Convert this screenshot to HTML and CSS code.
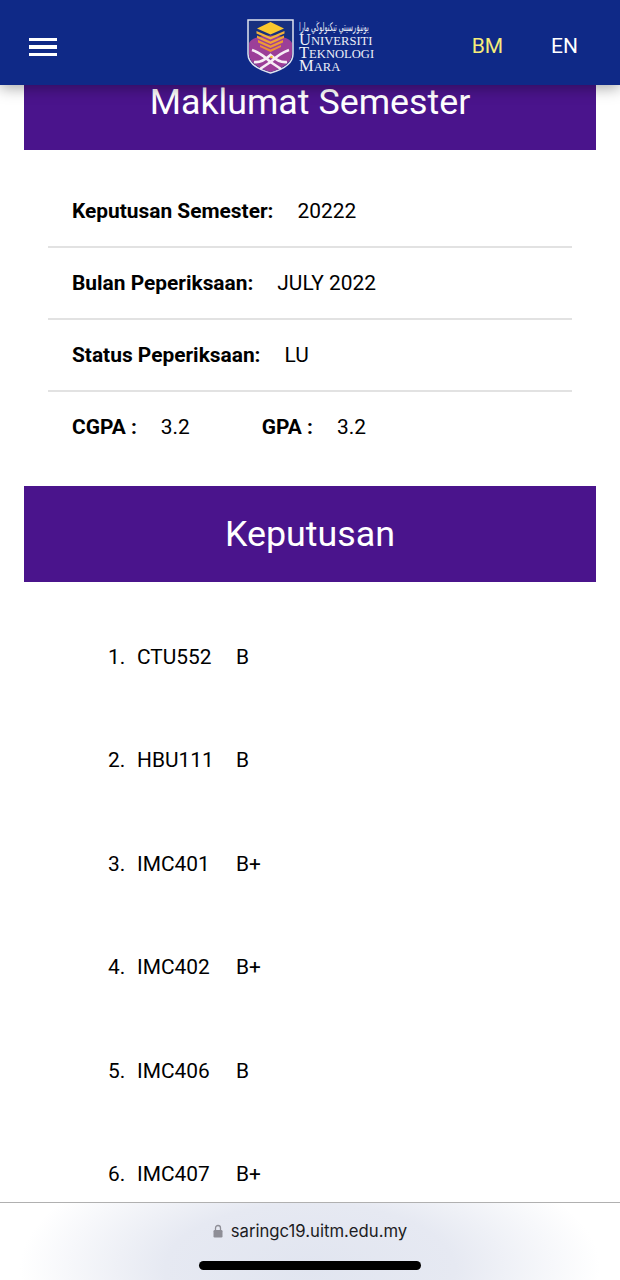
FILE: index.html
```html
<!DOCTYPE html>
<html lang="en">

<head>
  <meta charset="UTF-8">
  <meta name="viewport" content="width=device-width, initial-scale=1.0">
  <title>Keputusan Peperiksaan</title>
  <link rel="stylesheet" href="styles.css">
</head>

<body>
  <header class="topbar">
    <div class="burger"><span></span><span></span><span></span></div>
    <div class="logo">
      <svg class="crest" width="47" height="55" viewBox="0 0 47 55">
        <path d="M1 1H46V35C46 45 34 51 23.500 54C13 51 1 45 1 35Z" fill="#17307f" stroke="#dfe3f0" stroke-width="1.500"/>
        <path d="M2 24C6 14 41 14 45 24V35C45 44 34 50 23.500 53C13 50 2 44 2 35Z" fill="#9c3f98"/>
        <path d="M23.500 3L37 9.500L23.500 15.500L10 9.500Z" fill="#f9c72e"/>
        <path d="M9.500 12L23.500 18L37.500 12V14.500L23.500 20.500L9.500 14.500Z" fill="#f3b23a"/>
        <path d="M10 16.500L23.500 22.500L37 16.500V19L23.500 25L10 19Z" fill="#f0a236"/>
        <path d="M11 21L23.500 26.500L36 21V23.500L23.500 29L11 23.500Z" fill="#ee9a34"/>
        <path d="M13 26L23.500 30.500L34 26V28L23.500 33L13 28Z" fill="#ea8f38"/>
        <path d="M5 31C11 33 17 37 23.500 43C30 37 36 33 42 31M7 43C13 44 18 41 23.500 36C29 41 34 44 40 43M13 50L23.500 43L34 50" fill="none" stroke="#f6eef5" stroke-width="2.600"/>
        <circle cx="24.500" cy="38" r="1.300" fill="#f9c72e"/>
      </svg>
      <div class="wordmark">
        <div class="jawi">يونيۏرسيتي تيكنولوڬي مارا</div>
        <div class="uni">U<small>NIVERSITI</small></div>
        <div class="uni">T<small>EKNOLOGI</small></div>
        <div class="uni">M<small>ARA</small></div>
      </div>
    </div>
    <div class="langs">
      <a class="lang active">BM</a>
      <a class="lang">EN</a>
    </div>
  </header>

  <main>
    <h2 class="band band-first">Maklumat Semester</h2>
    <div class="info">
      <div class="info-row"><b>Keputusan Semester:</b><span>20222</span></div>
      <div class="info-row"><b>Bulan Peperiksaan:</b><span>JULY 2022</span></div>
      <div class="info-row"><b>Status Peperiksaan:</b><span>LU</span></div>
      <div class="info-row no-line">
        <b>CGPA :</b><span class="cgpa-val">3.2</span>
        <b>GPA :</b><span>3.2</span>
      </div>
    </div>

    <h2 class="band">Keputusan</h2>
    <ol class="results">
      <li><span class="code">CTU552</span><span>B</span></li>
      <li><span class="code">HBU111</span><span>B</span></li>
      <li><span class="code">IMC401</span><span>B+</span></li>
      <li><span class="code">IMC402</span><span>B+</span></li>
      <li><span class="code">IMC406</span><span>B</span></li>
      <li><span class="code">IMC407</span><span>B+</span></li>
    </ol>
  </main>

  <footer class="safari">
    <div class="url">
      <svg width="10" height="14" viewBox="0 0 10 14"><path d="M2.500 6V4a2.500 2.500 0 0 1 5 0V6" fill="none" stroke="#8e8e96" stroke-width="1.300"/><rect x="0.500" y="6" width="9" height="7.500" rx="1.200" fill="#8e8e96"/></svg>
      <span>saringc19.uitm.edu.my</span>
    </div>
    <div class="home"></div>
  </footer>
</body>

</html>
```
FILE: styles.css
```css
body {
  margin: 0;
  width: 620px;
  height: 1280px;
  overflow: hidden;
  background: #fff;
  color: #000;
  font-family: Roboto, "Liberation Sans", sans-serif;
  font-size: 20.900px;
}

/* top navigation */
.topbar {
  height: 85px;
  display: flex;
  align-items: center;
  padding: 8px 42px 0 29px;
  background: #0f2987;
  box-shadow: 0 3px 14px rgba(0, 0, 0, 0.35);
  position: relative;
  z-index: 2;
  box-sizing: border-box;
}

.burger {
  width: 28px;
  display: flex;
  flex-direction: column;
  gap: 4px;
  margin-top: 1px;
}

.burger span {
  display: block;
  height: 3.500px;
  background: #fff;
}

.logo {
  display: flex;
  align-items: center;
  gap: 5px;
  margin-left: 190px;
}

.crest {
  display: block;
}

.wordmark {
  color: #eef0f8;
  font-family: "Liberation Serif", serif;
  font-size: 16.500px;
  line-height: 12px;
  width: 76px;
  white-space: nowrap;
  margin-bottom: 2px;
}

.uni small {
  font-size: 12.600px;
}

/* the real logo has tall calligraphy here */
.jawi {
  font-family: "DejaVu Sans", sans-serif;
  font-size: 6.300px;
  line-height: 15px;
  direction: rtl;
  text-align: left;
  transform: scaleY(1.900);
}

.langs {
  margin-left: auto;
  display: flex;
  gap: 48px;
  margin-bottom: 2px;
}

.lang {
  color: #fff;
  font-size: 21px;
}

.lang.active {
  color: #f5ec7a;
}

/* section bands */
.band {
  margin: 0 24px;
  height: 96px;
  line-height: 96px;
  text-align: center;
  font-size: 35.800px;
  font-weight: 400;
  color: #fff;
  background: #4a148c;
}

.band-first {
  height: 65px;
  line-height: 35px;
}

.info {
  padding: 26px 48px 22px;
}

.info-row {
  height: 70px;
  display: flex;
  align-items: center;
  padding-left: 24px;
  border-bottom: 2px solid #e2e2e2;
}

.info-row b {
  margin-right: 24px;
}

.info-row.no-line {
  border-bottom-color: transparent;
}

.cgpa-val {
  width: 101px;
}

/* result list */
.results {
  margin: 0;
  padding: 23px 0 0 108px;
  list-style: none;
  counter-reset: item;
}

.results li {
  height: 103.500px;
  display: flex;
  align-items: center;
  counter-increment: item;
}

.results li::before {
  content: counter(item) ".";
  width: 29px;
}

.code {
  width: 99px;
}

/* safari bottom bar */
.safari {
  position: absolute;
  left: 0;
  right: 0;
  top: 1202px;
  height: 78px;
  border-top: 1px solid #b0b0b0;
  box-sizing: border-box;
  background: radial-gradient(ellipse 290px 130px at 50% 85%, #e1e5f0 0%, #e6e9f2 50%, #fff 100%);
  display: flex;
  flex-direction: column;
  align-items: center;
}

.url {
  display: flex;
  align-items: center;
  gap: 8px;
  margin-top: 18px;
  font-family: Inter, "Liberation Sans", sans-serif;
  font-size: 16.700px;
  color: #1c1c22;
}

.home {
  width: 222px;
  height: 9px;
  margin-top: 20px;
  border-radius: 5px;
  background: #000;
}
```
